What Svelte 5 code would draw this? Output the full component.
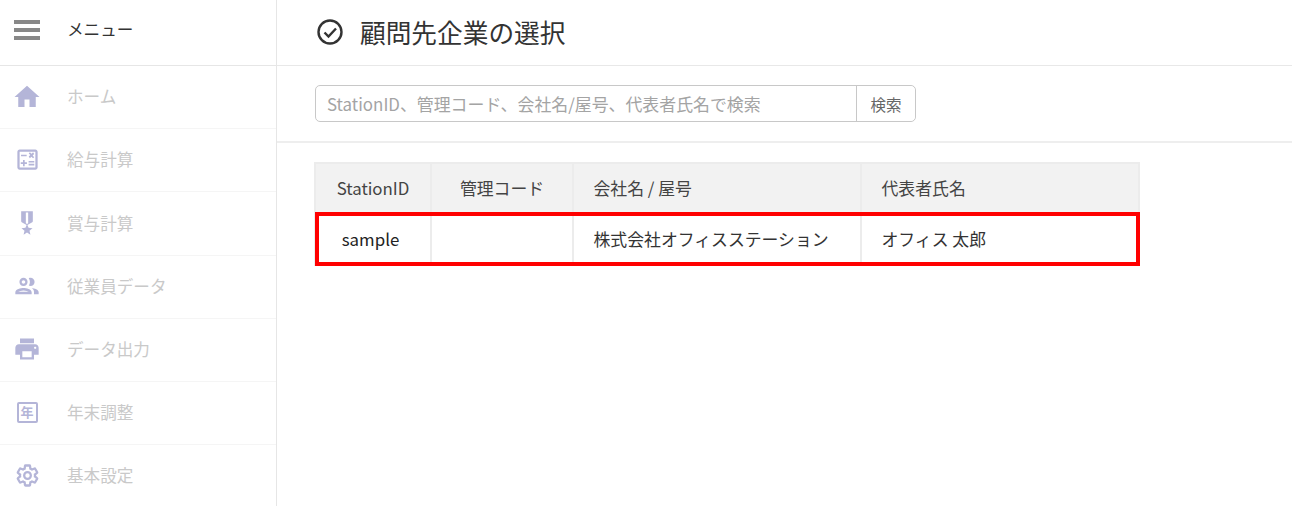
<script>
  const items = [
    { label: 'ホーム', icon: 'home' },
    { label: '給与計算', icon: 'calc' },
    { label: '賞与計算', icon: 'medal' },
    { label: '従業員データ', icon: 'people' },
    { label: 'データ出力', icon: 'print' },
    { label: '年末調整', icon: 'year' },
    { label: '基本設定', icon: 'gear' }
  ];
</script>

<div class="page">
  <aside class="sidebar">
    <div class="menu-head">
      <span class="burger"><i></i><i></i><i></i></span>
      <span class="menu-label">メニュー</span>
    </div>
    {#each items as item}
      <div class="nav-item">
        <span class="nav-icon">
          {#if item.icon === 'home'}
            <svg viewBox="0 0 24 24" width="30" height="30"><path d="M10 20v-6h4v6h5v-8h3L12 3 2 12h3v8z" /></svg>
          {:else if item.icon === 'calc'}
            <svg viewBox="0 0 24 24" width="27" height="27"><path d="M19 3H5c-1.100 0-2 .9-2 2v14c0 1.100.9 2 2 2h14c1.100 0 2-.9 2-2V5c0-1.100-.9-2-2-2zm0 16H5V5h14v14z" /><path d="M6.250 7.720h5v1.500h-5zM13 15.750h5v1.500h-5zM13 13.250h5v1.500h-5zM8 18h1.500v-2h2v-1.500h-2v-2H8v2H6V16h2zM14.090 10.950l1.410-1.410 1.410 1.410 1.060-1.060-1.410-1.420 1.410-1.410L16.970 5.500l-1.410 1.410-1.410-1.410-1.060 1.060 1.410 1.410-1.410 1.420z" /></svg>
          {:else if item.icon === 'medal'}
            <svg viewBox="0 0 24 24" width="28" height="28"><path fill-rule="evenodd" d="M17 10.430V2H7v8.430c0 .35.18.68.49.86l4.180 2.510-.99 2.340-3.410.29 2.590 2.240L9.070 22 12 20.230 14.930 22l-.78-3.330 2.590-2.240-3.410-.29-.99-2.340 4.180-2.510c.3-.18.48-.5.48-.86zM13 12.230l-1 .6-1-.6V3h2v9.230z" /></svg>
          {:else if item.icon === 'people'}
            <svg viewBox="0 0 24 24" width="28" height="28"><path d="M9 13.750c-2.340 0-7 1.170-7 3.500V19h14v-1.750c0-2.330-4.660-3.500-7-3.500zM4.340 17c.84-.58 2.870-1.250 4.660-1.250s3.820.67 4.660 1.250H4.340zM9 12c1.930 0 3.500-1.570 3.500-3.500S10.930 5 9 5 5.500 6.570 5.500 8.500 7.070 12 9 12zm0-5c.83 0 1.500.67 1.500 1.500S9.830 10 9 10s-1.500-.67-1.500-1.500S8.170 7 9 7zm7.040 6.810c1.160.84 1.960 1.960 1.960 3.440V19h4v-1.750c0-2.020-3.500-3.170-5.960-3.440zM15 12c1.930 0 3.500-1.570 3.500-3.500S16.930 5 15 5c-.54 0-1.040.13-1.500.35.63.89 1 1.980 1 3.150s-.37 2.260-1 3.150c.46.22.96.35 1.500.35z" /></svg>
          {:else if item.icon === 'print'}
            <svg viewBox="0 0 24 24" width="28" height="28"><path d="M19 8H5c-1.660 0-3 1.340-3 3v6h4v4h12v-4h4v-6c0-1.660-1.340-3-3-3zm-3 11H8v-5h8v5zm3-7c-.55 0-1-.45-1-1s.45-1 1-1 1 .45 1 1-.45 1-1 1zm-1-9H6v4h12V3z" /></svg>
          {:else if item.icon === 'year'}
            <span class="year-box">年</span>
          {:else}
            <svg viewBox="0 0 24 24" width="25" height="25"><path class="gear" d="M19.140 12.940c.04-.3.06-.61.06-.94 0-.32-.02-.64-.07-.94l2.030-1.580c.18-.14.23-.41.12-.61l-1.920-3.320c-.12-.22-.37-.29-.59-.22l-2.390.96c-.5-.38-1.030-.7-1.620-.94l-.36-2.540c-.04-.24-.24-.41-.48-.41h-3.840c-.24 0-.43.17-.47.41l-.36 2.540c-.59.24-1.130.57-1.620.94l-2.390-.96c-.22-.08-.47 0-.59.22L2.740 8.870c-.12.21-.08.47.12.61l2.030 1.580c-.05.3-.09.63-.09.94s.02.64.07.94l-2.030 1.580c-.18.14-.23.41-.12.61l1.920 3.320c.12.22.37.29.59.22l2.390-.96c.5.38 1.030.7 1.620.94l.36 2.540c.05.24.24.41.48.41h3.840c.24 0 .44-.17.47-.41l.36-2.540c.59-.24 1.130-.56 1.620-.94l2.390.96c.22.08.47 0 .59-.22l1.920-3.320c.12-.22.07-.47-.12-.61l-2.010-1.580z" /><circle class="gear" cx="12" cy="12" r="3.200" /></svg>
          {/if}
        </span>
        <span class="nav-label">{item.label}</span>
      </div>
    {/each}
  </aside>

  <main class="main">
    <header class="title-bar">
      <svg class="check" viewBox="0 0 26 26" width="26" height="26">
        <circle cx="13" cy="13" r="11.500" />
        <path d="M7.500 13.500l4 4 7.500-8" />
      </svg>
      <h1>顧問先企業の選択</h1>
    </header>

    <div class="search-bar">
      <div class="search-group">
        <input type="text" placeholder="StationID、管理コード、会社名/屋号、代表者氏名で検索" />
        <button type="button">検索</button>
      </div>
    </div>

    <div class="table-wrap">
      <table>
        <colgroup>
          <col class="c1" /><col class="c2" /><col class="c3" /><col class="c4" />
        </colgroup>
        <thead>
          <tr>
            <th class="center">StationID</th>
            <th class="center">管理コード</th>
            <th>会社名 / 屋号</th>
            <th>代表者氏名</th>
          </tr>
        </thead>
        <tbody>
          <tr>
            <td class="center strong">sample</td>
            <td></td>
            <td>株式会社オフィスステーション</td>
            <td>オフィス 太郎</td>
          </tr>
        </tbody>
      </table>
      <div class="highlight"></div>
    </div>
  </main>
</div>

<style>
  :global(body) {
    margin: 0;
    background: #fff;
  }
  .page {
    display: flex;
    height: 506px;
    overflow: hidden;
    font-family: "Noto Sans CJK JP", "Noto Sans", sans-serif;
    color: #333;
  }
  .sidebar {
    width: 276px;
    flex: none;
    border-right: 1px solid #e6e6e6;
  }
  .menu-head {
    box-sizing: border-box;
    display: flex;
    align-items: center;
    border-bottom: 1px solid #e6e6e6;
    height: 66px;
    padding-left: 14px;
    padding-bottom: 6px;
  }
  .burger {
    width: 26px;
    display: flex;
    flex-direction: column;
    gap: 4px;
  }
  .burger i {
    display: block;
    height: 4px;
    background: #888;
  }
  .menu-label {
    margin-left: 27px;
    font-size: 16.600px;
    line-height: 1;
    color: #333;
  }
  .nav-item {
    height: 63.200px;
    box-sizing: border-box;
    display: flex;
    align-items: center;
    border-bottom: 1px solid #f5f5f5;
    padding-bottom: 1px;
  }
  .nav-icon {
    width: 54px;
    margin-right: 13px;
    display: flex;
    justify-content: center;
    align-items: center;
    flex: none;
  }
  .nav-icon svg {
    fill: #b4b5d8;
    display: block;
  }
  .nav-icon .gear {
    fill: none;
    stroke: #b4b5d8;
    stroke-width: 2.200;
  }
  .year-box {
    width: 21px;
    height: 21px;
    box-sizing: border-box;
    border: 2px solid #b4b5d8;
    border-radius: 2px;
    color: #b4b5d8;
    font-size: 13px;
    font-weight: 700;
    line-height: 16px;
    text-align: center;
  }
  .nav-label {
    font-size: 16.600px;
    line-height: 1;
    color: #c9c9c9;
  }
  .main {
    flex: 1;
    min-width: 0;
  }
  .title-bar {
    height: 66px;
    box-sizing: border-box;
    border-bottom: 1px solid #e8e8e8;
    display: flex;
    align-items: center;
    padding-left: 40px;
    padding-bottom: 2px;
  }
  .check {
    flex: none;
    fill: none;
    stroke: #333;
    stroke-width: 2.400;
  }
  h1 {
    margin: 0 0 0 17px;
    font-size: 25.700px;
    font-weight: 400;
    line-height: 1;
  }
  .search-bar {
    height: 77px;
    box-sizing: border-box;
    border-bottom: 2px solid #eee;
    padding: 19px 0 0 38px;
  }
  .search-group {
    display: flex;
    width: 601px;
    height: 37px;
    box-sizing: border-box;
    border: 1px solid #c8c8c8;
    border-radius: 5px;
  }
  input {
    flex: 1;
    min-width: 0;
    border: 0;
    outline: 0;
    padding: 0 11px;
    background: none;
    font: inherit;
    font-size: 16.900px;
    color: #333;
    border-radius: 5px;
  }
  input::placeholder {
    color: #a4a4a4;
    opacity: 1;
  }
  button {
    width: 59px;
    flex: none;
    border: 0;
    border-left: 1px solid #c8c8c8;
    background: #fff;
    padding: 0;
    font: inherit;
    font-size: 15.500px;
    color: #666;
    border-radius: 0 5px 5px 0;
  }
  .table-wrap {
    position: relative;
    margin: 19px 0 0 38px;
    width: 825px;
  }
  table {
    border-collapse: collapse;
    table-layout: fixed;
    width: 824px;
    margin-left: -1px;
    font-size: 16.850px;
  }
  .c1 { width: 116px; }
  .c2 { width: 142px; }
  .c3 { width: 288px; }
  .c4 { width: 278px; }
  th, td {
    border: 2px solid #ececec;
    padding: 0 20px 3px 19.500px;
    text-align: left;
    font-weight: 400;
    color: #444;
    height: 51px;
    box-sizing: border-box;
  }
  th {
    background: #f2f2f2;
  }
  th.center, td.center {
    text-align: center;
    padding: 0 0 3px;
  }
  td.center.strong {
    color: #222;
    padding-right: 5px;
  }
  td {
    color: #333;
  }
  .highlight {
    position: absolute;
    left: 0;
    right: 0;
    top: 50px;
    height: 54px;
    box-sizing: border-box;
    border: 4px solid #f00;
    pointer-events: none;
  }
</style>
